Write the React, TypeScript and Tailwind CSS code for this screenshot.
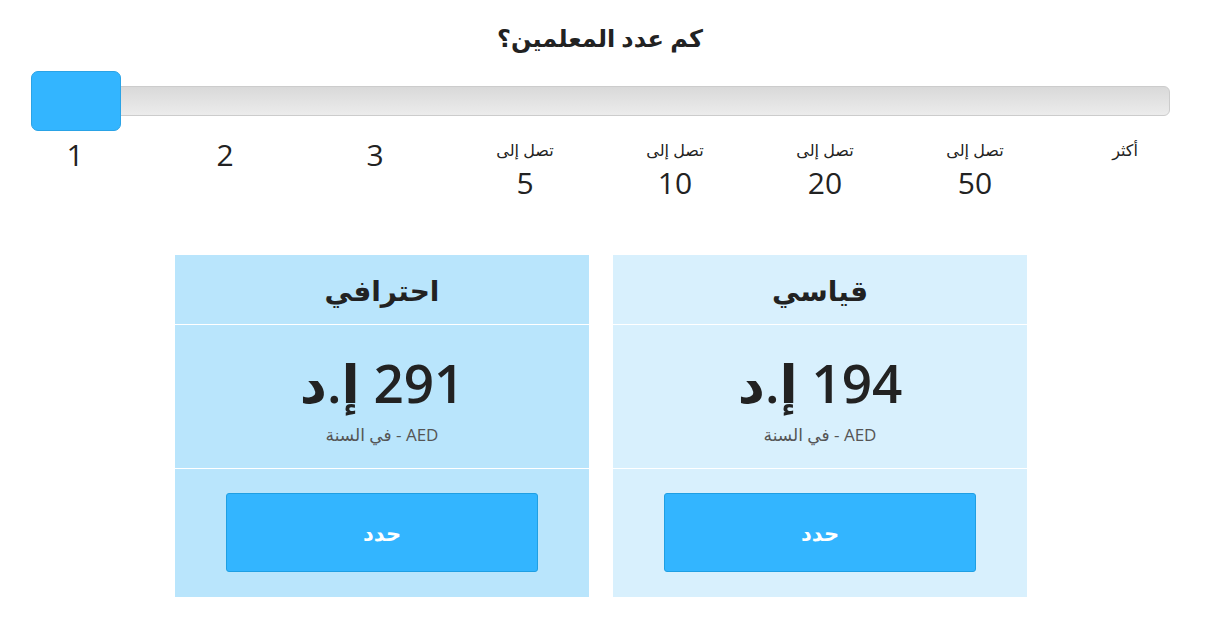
import React from "react";

const font = { fontFamily: '"Open Sans", "DejaVu Sans", sans-serif' };

const labels: { top?: string; value: string; big: boolean }[] = [
  { value: "1", big: true },
  { value: "2", big: true },
  { value: "3", big: true },
  { top: "تصل إلى", value: "5", big: false },
  { top: "تصل إلى", value: "10", big: false },
  { top: "تصل إلى", value: "20", big: false },
  { top: "تصل إلى", value: "50", big: false },
  { top: "أكثر", value: "", big: false },
];

function Card({ title, price, bg }: { title: string; price: string; bg: string }) {
  return (
    <div className={`w-[414px] ${bg} flex flex-col`}>
      <div className="h-[70px] border-b border-white flex items-center justify-center">
        <span className="text-[28px] font-bold text-[#222] leading-[36px]">{title}</span>
      </div>
      <div className="h-[144px] border-b border-white flex flex-col items-center pt-[26px]">
        <div dir="rtl" className="text-[53px] leading-[64px] font-semibold text-[#222]">
          {price}
        </div>
        <div dir="rtl" className="text-[17px] leading-[24px] text-[#555] mt-[8px]">
          AED - في السنة
        </div>
      </div>
      <div className="h-[128px] flex justify-center pt-[24px]">
        <button className="w-[312px] h-[79px] bg-[#33b5ff] border border-[#1f9fe3] rounded-[3px] text-white text-[21px] font-bold flex items-center justify-center pt-[3px]">
          حدد
        </button>
      </div>
    </div>
  );
}

export default function App() {
  return (
    <div className="w-[1200px] bg-white pt-[22px] pb-[26px]" style={font}>
      <div className="text-center text-[24px] leading-[32px] font-bold text-[#222]" dir="rtl">
        كم عدد المعلمين؟
      </div>

      <div className="mt-[17px] h-[60px] relative pl-[31px] pr-[30px] flex items-center">
        <div className="w-full h-[30px] rounded-[6px] border border-[#cccccc] bg-gradient-to-b from-[#d9d9d9] to-[#ececec]" />
        <div className="absolute left-[31px] top-0 w-[90px] h-[60px] rounded-[7px] bg-[#33b5ff] border border-[#2aa3e6]" />
      </div>

      <div className="mt-[9px] grid grid-cols-8 text-[#222]">
        {labels.map((l, i) => (
          <div key={i} className="flex flex-col items-center">
            {l.big ? (
              <span className="text-[30px] leading-[30px]">{l.value}</span>
            ) : (
              <>
                <span dir="rtl" className="text-[16px] leading-[20px]">
                  {l.top}
                </span>
                {l.value && (
                  <span className="mt-[8px] text-[30px] leading-[30px]">{l.value}</span>
                )}
              </>
            )}
          </div>
        ))}
      </div>

      <div dir="rtl" className="mt-[57px] flex justify-center gap-[24px] pl-[2px]">
        <Card title="قياسي" price="194 إ.د" bg="bg-[#d8f0fd]" />
        <Card title="احترافي" price="291 إ.د" bg="bg-[#b9e5fc]" />
      </div>
    </div>
  );
}
